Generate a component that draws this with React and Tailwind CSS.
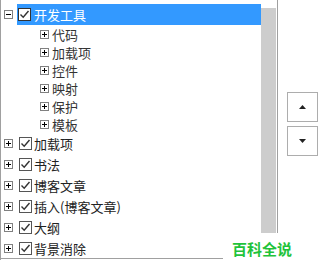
import React from "react";

const font = { fontFamily: '"Noto Sans CJK SC", "Noto Sans", sans-serif' };

function ExpandBox({ open }) {
  return (
    <svg width="9" height="9" viewBox="0 0 9 9" className="shrink-0">
      <rect x="0.5" y="0.5" width="8" height="8" fill="#fff" stroke="#808080" />
      <line x1="2" y1="4.5" x2="7" y2="4.5" stroke="#000" />
      {!open && <line x1="4.5" y1="2" x2="4.5" y2="7" stroke="#000" />}
    </svg>
  );
}

function Check({ dark }) {
  return (
    <svg width="13" height="13" viewBox="0 0 13 13" className="shrink-0">
      <rect x="0.5" y="0.5" width="12" height="12" fill="#fff" stroke={dark ? "#333" : "#555"} />
      <path d="M2.5 6.5 L5.2 9.2 L10.5 3" fill="none" stroke="#333" strokeWidth="1.4" />
    </svg>
  );
}

const children = ["代码", "加载项", "控件", "映射", "保护", "模板"];
const groups = ["加载项", "书法", "博客文章", "插入(博客文章)", "大纲", "背景消除"];

export default function App() {
  return (
    <div className="relative flex w-[329px] h-[260px] bg-white overflow-hidden" style={font}>
      <div className="flex flex-col w-[261px] border-l border-[#a0a0a0]">
        <div className="h-[258px] overflow-hidden pt-[4px]">
          <div className="flex items-center h-[21px] pl-[3px]">
            <ExpandBox open />
            <div className="flex items-center flex-1 h-full ml-[4px] pl-px bg-[#3399ff]">
              <Check dark />
              <span className="ml-[3px] text-[13px] text-white leading-none">开发工具</span>
            </div>
          </div>
          {children.map((c) => (
            <div key={c} className="flex items-center h-[18px] pl-[39px]">
              <ExpandBox />
              <span className="ml-[3px] text-[13px] text-[#333] leading-none">{c}</span>
            </div>
          ))}
          {groups.map((g) => (
            <div key={g} className="flex items-center h-[21px] pl-[3px]">
              <ExpandBox />
              <div className="ml-[6px]">
                <Check />
              </div>
              <span className="ml-[2px] text-[13px] text-[#222] leading-none">{g}</span>
            </div>
          ))}
        </div>
        <div className="w-[222px] h-px bg-[#a0a0a0]" />
      </div>
      <div className="w-[16px] pt-[8px]">
        <div className="w-[15px] h-[225px] bg-[#cdcdcd]" />
      </div>
      <div className="w-px h-[233px] bg-[#a0a0a0]" />
      <div className="flex flex-col gap-[4px] pt-[92px] pl-[9px]">
        <div className="flex items-center justify-center w-[31px] h-[30px] border border-[#adadad] bg-white">
          <svg width="7" height="4" viewBox="0 0 7 4">
            <path d="M0 4 L3.5 0 L7 4 Z" fill="#222" />
          </svg>
        </div>
        <div className="flex items-center justify-center w-[31px] h-[30px] border border-[#adadad] bg-white">
          <svg width="7" height="4" viewBox="0 0 7 4">
            <path d="M0 0 L3.5 4 L7 0 Z" fill="#222" />
          </svg>
        </div>
      </div>
      <div className="absolute left-[232px] top-[241px] text-[15px] font-bold leading-none text-[#1fc33a]">
        百科全说
      </div>
    </div>
  );
}
